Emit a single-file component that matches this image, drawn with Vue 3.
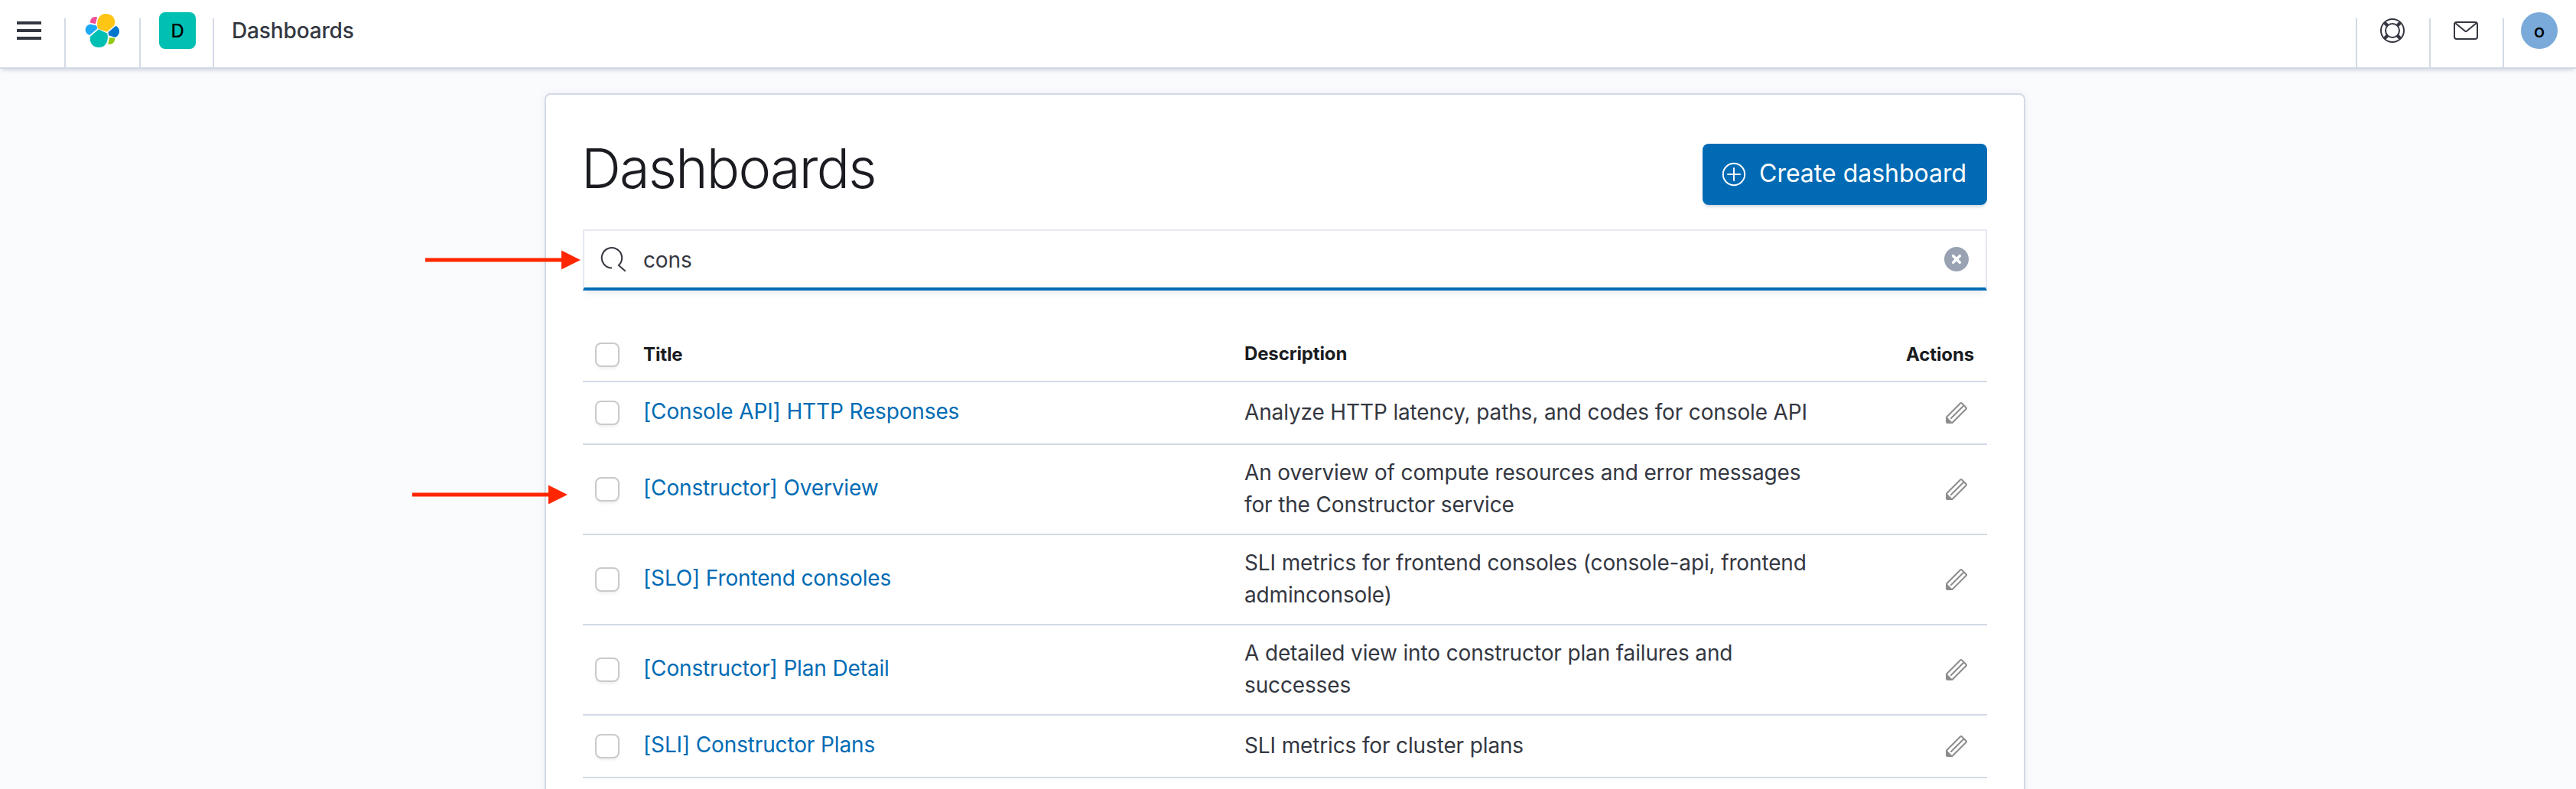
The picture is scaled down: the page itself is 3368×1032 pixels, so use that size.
<script setup>
const rows = [
  { title: '[Console API] HTTP Responses', lines: ['Analyze HTTP latency, paths, and codes for console API'] },
  { title: '[Constructor] Overview', lines: ['An overview of compute resources and error messages', 'for the Constructor service'] },
  { title: '[SLO] Frontend consoles', lines: ['SLI metrics for frontend consoles (console-api, frontend', 'adminconsole)'] },
  { title: '[Constructor] Plan Detail', lines: ['A detailed view into constructor plan failures and', 'successes'] },
  { title: '[SLI] Constructor Plans', lines: ['SLI metrics for cluster plans'] },
]
</script>

<template>
  <div class="page">
    <header class="header">
      <button class="menu" aria-label="Menu"><i></i><i></i><i></i></button>
      <div class="cell logo">
        <svg width="46" height="46" viewBox="333 51 138 138">
          <path fill="#FEC514" d="M383 112C376 78 389 54 415 54C444 54 458 80 447 101L419 125Z" />
          <path fill="#00BFB3" d="M387 115L421 131C428 162 413 186 388 186C363 186 349 165 354 143Z" />
          <path fill="#F04E98" d="M381 67L375 94L354 89C353 73 365 62 381 67Z" />
          <path fill="#1BA9F5" d="M353 95L376 99Q383 105 381 113L351 138C340 133 335 126 335 116C335 106 342 98 353 95Z" />
          <path fill="#0077CC" d="M454 101C463 105 468 114 468 123C468 134 462 142 452 147L426 139L425 126Z" />
          <path fill="#93C90E" d="M429 147L451 150C450 167 439 177 424 173Z" />
        </svg>
      </div>
      <div class="cell space"><span class="avatar square">D</span></div>
      <div class="cell crumb">Dashboards</div>
      <div class="cell right first">
        <svg width="32" height="32" viewBox="0 0 32 32" fill="none" stroke="#343741">
          <circle cx="16" cy="16" r="15" stroke-width="2" />
          <circle cx="16" cy="16" r="9" stroke-width="2" />
          <path stroke-width="4.4" d="M5.8 5.8l4 4M26.2 5.8l-4 4M5.8 26.2l4-4M26.2 26.2l-4-4" />
        </svg>
      </div>
      <div class="cell right">
        <svg width="32" height="32" viewBox="0 0 32 32" fill="none" stroke="#343741" stroke-width="2">
          <rect x="1" y="5" width="30" height="22" rx="3" />
          <path d="M2 6l13.3 10.9q.7.5 1.4 0L30 6" />
        </svg>
      </div>
      <div class="cell right"><span class="avatar round">o</span></div>
    </header>

    <main class="panel">
      <div class="heading">
        <h1>Dashboards</h1>
        <button class="create">
          <svg width="32" height="32" viewBox="0 0 32 32" fill="none" stroke="#fff" stroke-width="1.9">
            <circle cx="16" cy="16" r="14.2" />
            <path stroke-linecap="round" d="M16 8v16M8 16h16" />
          </svg>
          <span>Create dashboard</span>
        </button>
      </div>

      <div class="search">
        <svg class="glass" width="34" height="34" viewBox="0 0 34 34" fill="none" stroke="#343741" stroke-width="2">
          <path d="M15 28.5A13.2 13.2 0 1 1 23.9 25L32.7 32.7" />
        </svg>
        <span class="query">cons</span>
        <svg width="32" height="32" viewBox="0 0 32 32">
          <circle cx="16" cy="16" r="16" fill="#98A2B3" />
          <path stroke="#fff" stroke-width="3.6" stroke-linecap="round" d="M11.7 11.7l8.6 8.6M20.3 11.7l-8.6 8.6" />
        </svg>
      </div>

      <div class="table">
        <div class="row head">
          <span class="check"></span>
          <b class="title">Title</b>
          <b class="desc">Description</b>
          <b class="actions">Actions</b>
        </div>
        <div v-for="row in rows" :key="row.title" class="row">
          <span class="check"></span>
          <a class="title">{{ row.title }}</a>
          <div class="desc"><div v-for="line in row.lines" :key="line">{{ line }}</div></div>
          <svg class="pencil" width="32" height="32" viewBox="0 0 16 16" fill="#8c8c8c">
            <path d="M12.148 3.148L11 2l-9 9v3h3l9-9-1.144-1.144-8.002 7.998a.502.502 0 01-.708 0 .502.502 0 010-.708l8.002-7.998zM11 1c.256 0 .512.098.707.293l3 3a.999.999 0 010 1.414l-9 9A.997.997 0 015 15H2a1 1 0 01-1-1v-3c0-.265.105-.52.293-.707l9-9A.997.997 0 0111 1zM5 14H2v-3l3 3z" />
          </svg>
        </div>
      </div>
    </main>

    <svg class="arrow to-search" width="203" height="26" viewBox="0 0 203 26" fill="#FF2600">
      <path d="M0 10.5H178V.5L203 13L178 25.5V15.5H0Z" />
    </svg>
    <svg class="arrow to-row" width="203" height="26" viewBox="0 0 203 26" fill="#FF2600">
      <path d="M0 10.5H178V.5L203 13L178 25.5V15.5H0Z" />
    </svg>
  </div>
</template>

<style>
body {
  margin: 0;
}
</style>

<style scoped>
.page {
  position: relative;
  width: 3368px;
  height: 1032px;
  overflow: hidden;
  background: #fafbfd;
  font-family: Inter, "Liberation Sans", sans-serif;
  font-size: 28px;
  color: #343741;
  letter-spacing: -0.005em;
}
.page * {
  box-sizing: border-box;
}
button {
  border: 0;
  margin: 0;
  font: inherit;
  letter-spacing: inherit;
}
svg {
  display: block;
  flex: none;
}
.header {
  display: flex;
  height: 90px;
  background: #fff;
  border-bottom: 2px solid #d3dae6;
  box-shadow: 0 4px 4px -2px rgba(152, 162, 179, 0.3), 0 2px 10px -4px rgba(152, 162, 179, 0.3);
}
.menu {
  display: flex;
  flex-direction: column;
  gap: 6px;
  width: 84px;
  padding: 28px 30px 0 22px;
  background: none;
}
.menu i {
  height: 4px;
  background: #343741;
}
.cell {
  height: 64px;
  margin-top: 24px;
  border-left: 2px solid #d3dae6;
}
.cell > * {
  margin-top: -8px;
}
.logo {
  width: 98px;
  padding-left: 25px;
}
.logo svg {
  margin-top: -7px;
}
.space {
  width: 96px;
  padding-left: 24px;
}
.avatar {
  display: flex;
  align-items: center;
  justify-content: center;
  width: 48px;
  height: 48px;
  font-size: 24px;
  font-weight: 500;
  color: #000;
}
.square {
  background: #00bfb3;
  border-radius: 8px;
}
.round {
  background: #79aad9;
  border-radius: 50%;
}
.crumb {
  flex: 1;
  padding-left: 23px;
  line-height: 32px;
  font-weight: 500;
}
.right {
  width: 96px;
  padding-left: 30px;
}
.right > svg {
  margin-top: 0;
}
.right > .round {
  margin-left: -8px;
}
.panel {
  width: 1936px;
  height: 980px;
  margin: 32px 0 0 712px;
  padding: 64px 48px 0;
  background: #fff;
  border: 2px solid #d3dae6;
  border-radius: 8px;
  box-shadow: 0 4px 4px -2px rgba(152, 162, 179, 0.2), 0 0 10px rgba(152, 162, 179, 0.15);
}
.heading {
  display: flex;
  justify-content: space-between;
  height: 112px;
}
h1 {
  margin: -12px 0 0 -2px;
  font-size: 72px;
  line-height: 88px;
  font-weight: 300;
  letter-spacing: -0.0245em;
  color: #1a1c21;
}
.create {
  display: flex;
  align-items: center;
  gap: 17px;
  width: 372px;
  height: 80px;
  padding: 0 0 0 25px;
  background: #006bb4;
  border-radius: 8px;
  color: #fff;
  font-size: 32px;
  letter-spacing: 0;
  box-shadow: 0 4px 4px -2px rgba(54, 97, 126, 0.3);
}
.create span {
  margin-top: -4px;
}
.search {
  display: flex;
  align-items: center;
  height: 80px;
  padding: 0 22px 0 21px;
  background: #fff;
  border: 2px solid #e6e9f2;
  border-bottom: 4px solid #006bb4;
  box-shadow: 0 8px 8px -4px rgba(152, 162, 179, 0.2);
}
.glass {
  margin-right: 22px;
}
.query {
  flex: 1;
  margin-top: 2px;
}
.table {
  margin-top: 50px;
}
.row {
  display: flex;
  align-items: center;
  padding: 16px;
  border-bottom: 2px solid #d3dae6;
  min-height: 82px;
}
.head {
  min-height: 70px;
  padding: 0 17px 0 16px;
  font-size: 24px;
  color: #1a1c21;
}
.head b {
  margin-top: -2px;
}
.check {
  width: 32px;
  height: 32px;
  border: 2px solid #cacaca;
  border-radius: 8px;
  background: #fff;
  box-shadow: 0 4px 4px -2px rgba(152, 162, 179, 0.2);
}
.title {
  width: 786px;
  margin-left: 31px;
}
a.title {
  color: #006bb4;
  line-height: 42px;
  margin-top: -4px;
}
.desc {
  flex: 1;
  line-height: 42px;
}
div.desc {
  margin-top: -1px;
  margin-bottom: 1px;
}
.pencil {
  margin-right: 8px;
}
.arrow {
  position: absolute;
}
.to-search {
  left: 556px;
  top: 327px;
}
.to-row {
  left: 539px;
  top: 634px;
}
</style>
